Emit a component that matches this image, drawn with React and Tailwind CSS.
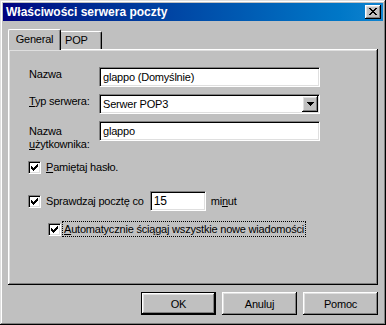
import React from "react";

const raised =
  "shadow-[inset_-1px_-1px_0_#000,inset_1px_1px_0_#fff,inset_-2px_-2px_0_#808080,inset_2px_2px_0_#dfdfdf]";
const sunken =
  "border border-t-[#808080] border-l-[#808080] border-r-white border-b-white shadow-[inset_1px_1px_0_#000,inset_-1px_-1px_0_#dfdfdf] bg-white";

function Check() {
  return (
    <div className={`w-[13px] h-[13px] shrink-0 relative ${sunken}`}>
      <svg width="7" height="7" viewBox="0 0 7 7" shapeRendering="crispEdges" className="absolute left-[2px] top-[2px]">
        <path
          d="M6 0h1v3h-1zM5 1h1v3h-1zM4 2h1v3h-1zM3 3h1v3h-1zM2 4h1v3h-1zM1 3h1v3h-1zM0 2h1v3h-1z"
          fill="#000"
        />
      </svg>
    </div>
  );
}

function Button({ children, def }) {
  return (
    <div
      className={`w-[75px] h-[23px] flex items-center justify-center ${
        def
          ? "border border-black shadow-[inset_-1px_-1px_0_#000,inset_1px_1px_0_#fff,inset_-2px_-2px_0_#808080,inset_2px_2px_0_#dfdfdf]"
          : raised
      }`}
    >
      <span className="pt-px">{children}</span>
    </div>
  );
}

export default function App() {
  return (
    <div
      className="w-[386px] h-[325px] bg-[#c0c0c0] text-black text-[11px] tracking-[-0.2px] leading-[13px] font-['Liberation_Sans',Arial,sans-serif] p-[3px] flex flex-col shadow-[inset_-1px_-1px_0_#000,inset_1px_1px_0_#dfdfdf,inset_-2px_-2px_0_#808080,inset_2px_2px_0_#fff]"
    >
      {/* Title bar */}
      <div className="h-[18px] shrink-0 bg-linear-to-r from-[#000080] to-[#1084d0] flex items-center pl-[3px] pr-[2px]">
        <span className="text-white font-bold text-[12px] tracking-normal flex-1">
          Właściwości serwera poczty
        </span>
        <div className={`w-[16px] h-[14px] bg-[#c0c0c0] relative ${raised}`}>
          <svg width="8" height="7" viewBox="0 0 8 7" shapeRendering="crispEdges" className="absolute left-[4px] top-[3px]">
            <path
              d="M0 0h2v1h-2zM6 0h2v1h-2zM1 1h2v1h-2zM5 1h2v1h-2zM2 2h4v1h-4zM3 3h2v1h-2zM2 4h4v1h-4zM1 5h2v1h-2zM5 5h2v1h-2zM0 6h2v1h-2zM6 6h2v1h-2z"
              fill="#000"
            />
          </svg>
        </div>
      </div>

      <div className="flex flex-col pl-[5px] pt-[8px]">
        {/* Tabs */}
        <div className="flex items-end h-[20px] relative z-10">
          <div className="w-[53px] h-[21px] -mb-px bg-[#c0c0c0] border-l border-t border-white border-r border-r-black rounded-tl-[2px] rounded-tr-[2px] shadow-[inset_-1px_0_0_#808080] flex items-center justify-center pb-[2px]">
            General
          </div>
          <div className="w-[41px] h-[18px] border-t border-white border-r border-r-black rounded-tr-[2px] shadow-[inset_-1px_0_0_#808080] flex items-center pl-[4px]">
            POP
          </div>
        </div>

        {/* Panel */}
        <div className={`w-[370px] h-[236px] pl-[21px] pt-[18px] flex flex-col ${raised}`}>
          <div className="grid grid-cols-[70px_221px] gap-y-[7px]">
            <div className="pt-px">Nazwa</div>
            <div className={`h-[20px] flex items-center pl-[3px] ${sunken}`}>glappo (Domyślnie)</div>

            <div className="pt-px">
              <span className="underline">T</span>yp serwera:
            </div>
            <div className={`h-[20px] flex items-center pl-[3px] pr-px ${sunken}`}>
              <span className="flex-1">Serwer POP3</span>
              <div className={`w-[16px] h-[16px] bg-[#c0c0c0] flex items-center justify-center ${raised}`}>
                <svg width="7" height="4" viewBox="0 0 7 4" shapeRendering="crispEdges">
                  <path d="M0 0h7v1h-7zM1 1h5v1h-5zM2 2h3v1h-3zM3 3h1v1h-1z" fill="#000" />
                </svg>
              </div>
            </div>

            <div className="pt-[4px]">
              Nazwa
              <br />
              <span className="underline">u</span>żytkownika:
            </div>
            <div className={`h-[20px] flex items-center pl-[3px] ${sunken}`}>glappo</div>
          </div>

          <div className="flex items-center h-[13px] mt-[10px] -ml-px">
            <Check />
            <span className="ml-[5px]">
              <span className="underline">P</span>amiętaj hasło.
            </span>
          </div>

          <div className="flex items-center h-[20px] mt-[17px] -ml-px">
            <Check />
            <span className="ml-[5px]">Sprawdzaj pocztę co</span>
            <div className={`w-[56px] h-[20px] ml-[6px] flex items-center pl-[3px] text-[12px] ${sunken}`}>15</div>
            <span className="ml-[5px]">
              mi<span className="underline">n</span>ut
            </span>
          </div>

          <div className="flex items-center h-[16px] mt-[10px] ml-[19px]">
            <Check />
            <span className="ml-px border border-dotted border-black px-px h-[16px] flex items-center">
              <span className="underline">A</span>utomatycznie ściągaj wszystkie nowe wiadomości
            </span>
          </div>
        </div>

        {/* Buttons */}
        <div className="flex justify-end gap-[6px] w-[370px] mt-[7px]">
          <Button def>OK</Button>
          <Button>Anuluj</Button>
          <Button>Pomoc</Button>
        </div>
      </div>
    </div>
  );
}
